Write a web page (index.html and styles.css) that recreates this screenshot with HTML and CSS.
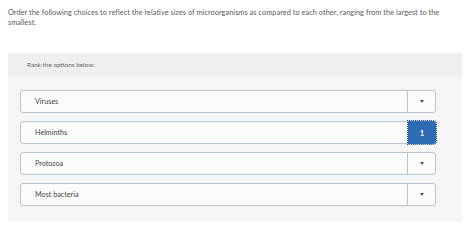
FILE: index.html
```html
<!DOCTYPE html>
<html lang="en">
<head>
    <meta charset="UTF-8">
    <title>Rank the options</title>
    <link rel="stylesheet" href="styles.css">
</head>
<body>

<div class="question">
    <p class="prompt">Order the following choices to reflect the relative sizes of microorganisms as compared to each other, ranging from the largest to the smallest.</p>

    <div class="rank-panel">
        <div class="rank-header">Rank the options below.</div>

        <div class="rank-list">
            <div class="rank-row">
                <span class="rank-label">Viruses</span>
                <button type="button" class="rank-select"><span class="caret"></span></button>
            </div>
            <div class="rank-row">
                <span class="rank-label">Helminths</span>
                <button type="button" class="rank-select selected">1</button>
            </div>
            <div class="rank-row">
                <span class="rank-label">Protozoa</span>
                <button type="button" class="rank-select"><span class="caret"></span></button>
            </div>
            <div class="rank-row">
                <span class="rank-label">Most bacteria</span>
                <button type="button" class="rank-select"><span class="caret"></span></button>
            </div>
        </div>
    </div>
</div>

</body>
</html>
```

FILE: styles.css
```css
body {
    font-family: Lato, "Liberation Sans", sans-serif;
    background-color: #ffffff;
    margin: 0;
    padding: 8px 12px 0 8px;
    color: #444;
}
.prompt {
    margin: 0;
    font-size: 7.35px;
    line-height: 10px;
    letter-spacing: 0.05px;
    color: #5a5a5a;
}
.rank-panel {
    margin-top: 25px;
    background-color: #f5f5f5;
    padding-bottom: 16px;
}
.rank-header {
    background-color: #efefef;
    height: 23px;
    line-height: 23px;
    padding-left: 19px;
    font-size: 6.4px;
    color: #666;
}
.rank-list {
    display: flex;
    flex-direction: column;
    gap: 8px;
    padding: 14px 26px 0 12px;
}
.rank-row {
    display: flex;
    height: 23px;
    box-sizing: border-box;
    border: 1px solid #b9c3d3;
    border-radius: 3px;
    background-color: #fcfcfd;
}
.rank-label {
    flex: 1;
    line-height: 21px;
    padding-left: 14px;
    font-size: 7.2px;
    color: #444;
}
.rank-select {
    width: 28px;
    border: none;
    border-left: 1px solid #b9c3d3;
    background: transparent;
    padding: 0;
    display: flex;
    align-items: center;
    justify-content: center;
    font-family: inherit;
    cursor: pointer;
}
.caret {
    width: 0;
    height: 0;
    border-left: 2.5px solid transparent;
    border-right: 2.5px solid transparent;
    border-top: 3px solid #4a4f5a;
}
.rank-select.selected {
    background-color: #2e6db4;
    color: #ffffff;
    font-size: 7px;
    font-weight: bold;
    margin: -1px -1px -1px 0;
    border-left: none;
    border-radius: 0 3px 3px 0;
    outline: 1px dotted #1d4f8c;
}
```
